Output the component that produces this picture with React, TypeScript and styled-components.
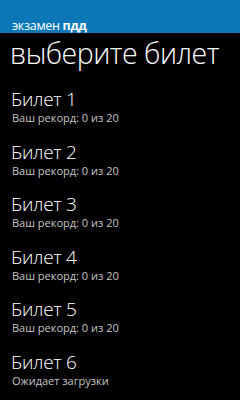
import React from 'react'
import styled, { createGlobalStyle } from 'styled-components'

const GlobalStyle = createGlobalStyle`
  html, body {
    margin: 0;
    padding: 0;
    background: #000;
  }
  body {
    font-family: "Open Sans", "Noto Sans", "DejaVu Sans", sans-serif;
    color: #fff;
  }
`

const Page = styled.div`
  width: 240px;
  height: 400px;
  background: #000;
  overflow: hidden;
`

const AppBar = styled.div`
  height: 33px;
  background: #0c77b7;
  display: flex;
  align-items: flex-end;
  padding: 0 12px;
  box-sizing: border-box;
`

const AppName = styled.span`
  font-size: 12.5px;
  line-height: 13px;
  margin-bottom: 1px;
  letter-spacing: -0.3px;
  color: #fff;
  b {
    font-weight: 700;
  }
`

const Title = styled.h1`
  margin: 0;
  padding: 0 0 0 10px;
  font-size: 28.5px;
  font-weight: 300;
  line-height: 40px;
  letter-spacing: -0.5px;
`

const List = styled.div`
  display: flex;
  flex-direction: column;
  padding: 15px 0 0 11px;
  gap: 14.5px;
`

const Item = styled.div`
  display: flex;
  flex-direction: column;
`

const ItemTitle = styled.div`
  font-size: 19px;
  line-height: 22px;
  font-weight: 300;
  letter-spacing: -0.3px;
`

const ItemSub = styled.div`
  font-size: 11px;
  line-height: 16px;
  padding-left: 1px;
  color: #c4c4c4;
`

const tickets = [
  { name: 'Билет 1', status: 'Ваш рекорд: 0 из 20' },
  { name: 'Билет 2', status: 'Ваш рекорд: 0 из 20' },
  { name: 'Билет 3', status: 'Ваш рекорд: 0 из 20' },
  { name: 'Билет 4', status: 'Ваш рекорд: 0 из 20' },
  { name: 'Билет 5', status: 'Ваш рекорд: 0 из 20' },
  { name: 'Билет 6', status: 'Ожидает загрузки' },
]

function App() {
  return (
    <Page>
      <GlobalStyle />
      <AppBar>
        <AppName>экзамен <b>пдд</b></AppName>
      </AppBar>
      <Title>выберите билет</Title>
      <List>
        {tickets.map((t) => (
          <Item key={t.name}>
            <ItemTitle>{t.name}</ItemTitle>
            <ItemSub>{t.status}</ItemSub>
          </Item>
        ))}
      </List>
    </Page>
  )
}

export default App
